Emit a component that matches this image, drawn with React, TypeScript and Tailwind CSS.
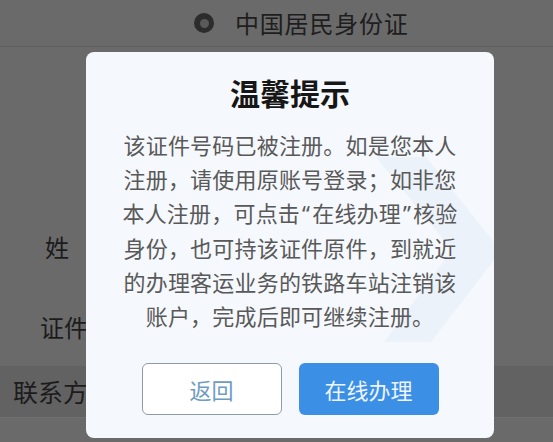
import React from 'react';

const Q = ({ children }: { children: string }) => (
  <span className="mx-[2px]" style={{ fontFamily: '"Noto Sans", sans-serif' }}>
    {children}
  </span>
);

const bodyLines: React.ReactNode[] = [
  '该证件号码已被注册。如是您本人',
  '注册，请使用原账号登录；如非您',
  <>
    本人注册，可点击<Q>“</Q>在线办理<Q>”</Q>核验
  </>,
  '身份，也可持该证件原件，到就近',
  '的办理客运业务的铁路车站注销该',
  '账户，完成后即可继续注册。',
];

function Radio() {
  return (
    <span className="flex h-[20px] w-[20px] items-center justify-center rounded-full bg-[#2c2c2c]">
      <span className="h-[9px] w-[9px] rounded-full bg-[#5a5a5a]" />
    </span>
  );
}

function NoticeDialog() {
  return (
    <div className="absolute left-[86px] top-[52px] h-[386px] w-[408px] overflow-hidden rounded-lg bg-[#f5f8fc]">
      {/* faint chevron watermark on the right */}
      <svg className="absolute left-0 top-0" width="408" height="386" viewBox="0 0 408 386">
        <polygon points="290,105 340,105 408,190 408,208 345,290 298,290 366,198" fill="#e8eff8" opacity="0.7" />
      </svg>

      <div className="relative flex flex-col items-center pt-[20px]">
        <h2 className="text-[30px] font-bold leading-[40px] text-[#161616]">温馨提示</h2>
        <p className="mt-[15px] text-center text-[22px] leading-[34px] tracking-[0.2px] text-[#595959]">
          {bodyLines.map((line, i) => (
            <span key={i} className="block">
              {line}
            </span>
          ))}
        </p>
        <div className="mt-[31px] flex gap-[17px]">
          <button className="h-[52px] w-[140px] rounded-md border-[1.5px] border-[#8e9ca6] bg-white text-[22px] text-[#6e9cc2]">
            返回
          </button>
          <button className="h-[52px] w-[140px] rounded-md bg-[#3b8fe5] text-[22px] text-[#eef4ff]">
            在线办理
          </button>
        </div>
      </div>
    </div>
  );
}

export default function App() {
  return (
    <div
      className="relative h-[442px] w-[553px] overflow-hidden bg-[#6a6a6a]"
      style={{ fontFamily: '"Noto Sans CJK SC", "Noto Sans", sans-serif' }}
    >
      <div className="flex h-[47px] items-center gap-[21px] border-b border-[#5f5f5f] pl-[194px]">
        <Radio />
        <span className="text-[24px] tracking-[0.8px] text-[#1e1e1e]">中国居民身份证</span>
      </div>

      <div className="h-[160px]" />

      <div className="flex h-[80px] items-center pl-[45px] text-[24px] text-[#1c1c1c]">姓</div>
      <div className="flex h-[79px] items-center pl-[40px] text-[24px] text-[#1c1c1c]">证件</div>
      <div className="flex h-[51px] items-center bg-[#626262] pl-[13px] text-[25px] text-[#1c1c1c]">
        联系方式
      </div>
      <div className="h-px bg-[#707070]" />

      <NoticeDialog />
    </div>
  );
}
